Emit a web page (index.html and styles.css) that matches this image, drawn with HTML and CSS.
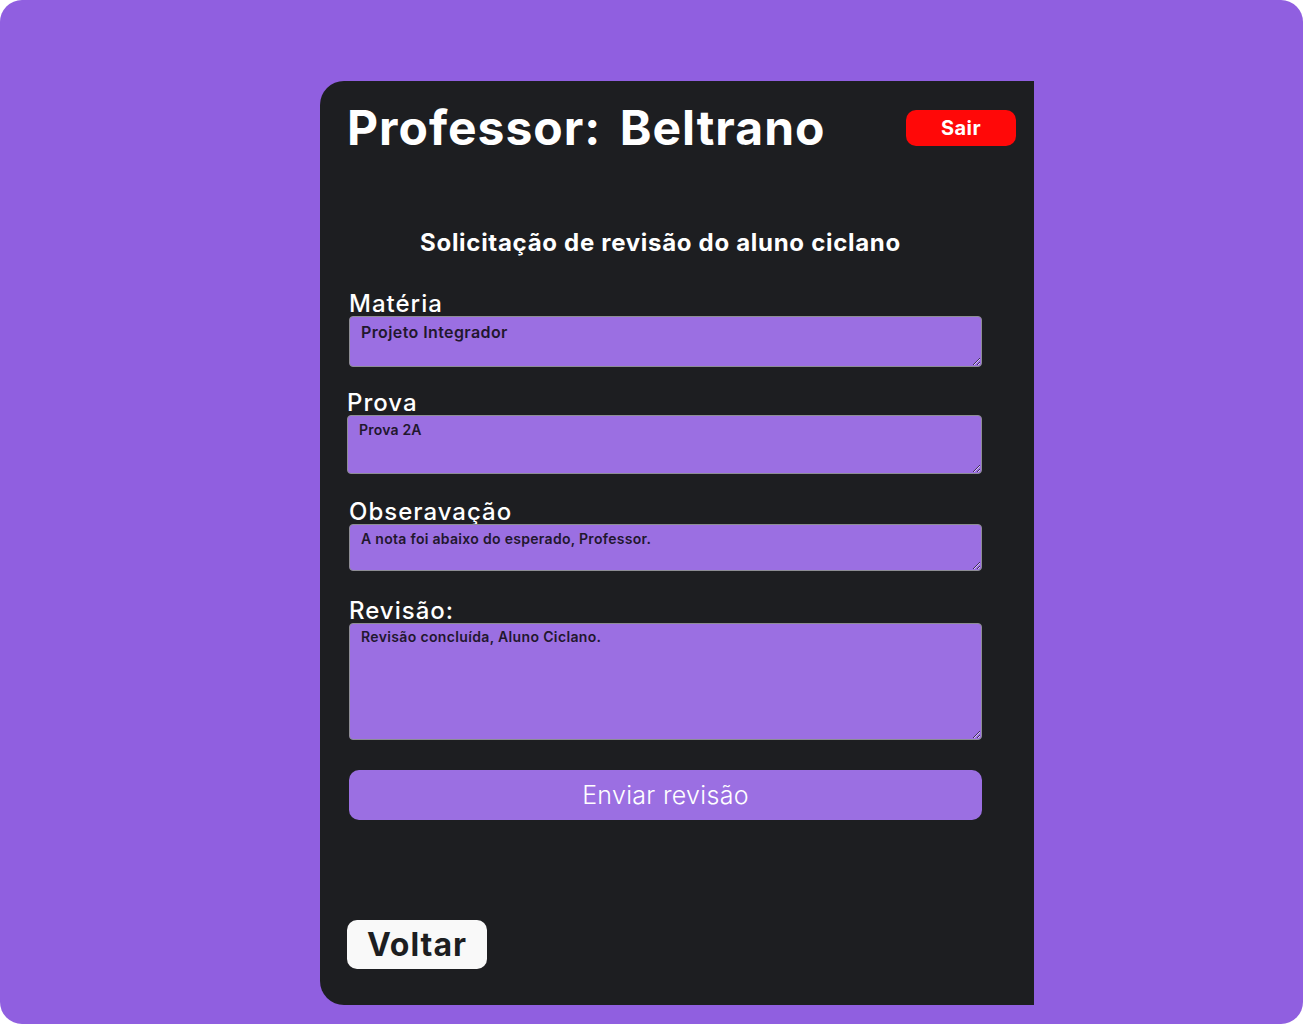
FILE: index.html
```html
<!DOCTYPE html>
<html lang="pt-BR">
<head>
<meta charset="utf-8">
<title>Revisão</title>
<link rel="stylesheet" href="styles.css">
</head>
<body>
<div class="frame">
  <main class="card">
    <header class="top">
      <h1 class="title">Professor: Beltrano</h1>
      <button class="btn-sair" type="button">Sair</button>
    </header>
    <h2 class="subtitle">Solicitação de revisão do aluno ciclano</h2>
    <form class="form">
      <label class="label">Matéria</label>
      <textarea class="field field-materia">Projeto Integrador</textarea>

      <label class="label label-prova">Prova</label>
      <textarea class="field field-prova">Prova 2A</textarea>

      <label class="label label-obs">Obseravação</label>
      <textarea class="field field-obs">A nota foi abaixo do esperado, Professor.</textarea>

      <label class="label label-rev">Revisão:</label>
      <textarea class="field field-rev">Revisão concluída, Aluno Ciclano.</textarea>

      <button class="btn-enviar" type="button">Enviar revisão</button>
    </form>
    <button class="btn-voltar" type="button">Voltar</button>
  </main>
</div>
</body>
</html>
```
FILE: styles.css
```css
html, body {
  margin: 0;
  padding: 0;
  background: #ffffff;
}
body {
  font-family: "Inter", "DejaVu Sans", sans-serif;
}
.frame {
  width: 1303px;
  height: 1024px;
  background: #905fe0;
  border-radius: 22px;
  box-sizing: border-box;
  padding: 81px 0 0 320px;
}
.card {
  width: 714px;
  height: 924px;
  background: #1d1e21;
  border-radius: 24px 0 0 24px;
  box-sizing: border-box;
  padding: 23px 18px 36px 27px;
  display: flex;
  flex-direction: column;
}
.top {
  display: flex;
  justify-content: space-between;
  align-items: flex-start;
}
.title {
  margin: 0;
  color: #ffffff;
  font-size: 48px;
  line-height: 48px;
  font-weight: 700;
  letter-spacing: 1px;
  word-spacing: 6px;
}
.btn-sair {
  margin-top: 6px;
  width: 110px;
  height: 36px;
  border: none;
  border-radius: 10px;
  background: #ff0808;
  color: #ffffff;
  font-family: inherit;
  font-weight: 700;
  font-size: 20px;
  letter-spacing: 0.4px;
  padding: 0;
}
.subtitle {
  margin: 76px 0 0 -3px;
  width: 633px;
  text-align: center;
  color: #ffffff;
  font-size: 24px;
  line-height: 30px;
  font-weight: 700;
  letter-spacing: 0.7px;
}
.form {
  display: flex;
  flex-direction: column;
  width: 633px;
  margin-left: 2px;
  margin-top: 34px;
}
.label {
  color: #ffffff;
  font-size: 24px;
  line-height: 24px;
  font-weight: 500;
  letter-spacing: 1px;
  margin-bottom: 0;
  height: 24px;
}
.label-prova {
  margin-top: 24px;
  margin-left: -2px;
}
.label-obs {
  margin-top: 26px;
}
.label-rev {
  margin-top: 28px;
}
.field {
  display: block;
  box-sizing: border-box;
  width: 633px;
  margin: 0;
  background: #9b6fe2;
  border: 1px solid #8d8d94;
  border-radius: 4px;
  color: #22172e;
  font-family: inherit;
  font-weight: 600;
  font-size: 14px;
  line-height: 18px;
  letter-spacing: 0.3px;
  padding: 8px 11px;
  resize: vertical;
}
.field-materia {
  height: 51px;
  font-size: 16px;
  letter-spacing: 0.4px;
  padding-top: 6px;
}
.field-prova {
  height: 59px;
  width: 635px;
  margin-left: -2px;
  letter-spacing: 0.2px;
  padding-top: 5px;
}
.field-obs {
  height: 47px;
  padding-top: 5px;
}
.field-rev {
  height: 117px;
  padding-top: 4px;
  letter-spacing: 0.35px;
}
.btn-enviar {
  margin-top: 30px;
  height: 50px;
  width: 633px;
  border: none;
  border-radius: 10px;
  background: #9b6fe2;
  color: #ffffff;
  font-family: inherit;
  font-weight: 300;
  font-size: 25px;
  letter-spacing: 0.3px;
  padding: 0;
}
.btn-voltar {
  margin-top: auto;
  align-self: flex-start;
  width: 140px;
  height: 49px;
  border: none;
  border-radius: 10px;
  background: #f9f9f9;
  color: #1d1e21;
  font-family: inherit;
  font-weight: 700;
  font-size: 32px;
  letter-spacing: 1px;
  padding: 0;
}
```
